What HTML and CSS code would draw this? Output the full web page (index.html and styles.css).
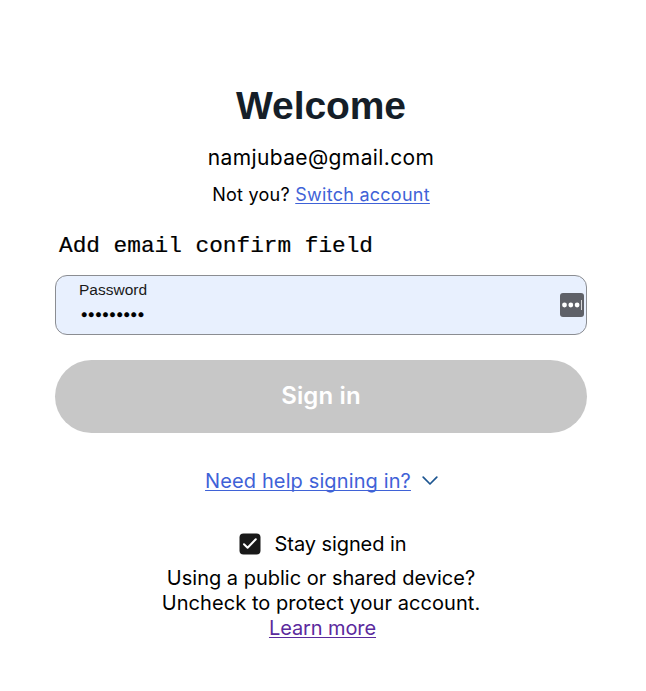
FILE: index.html
```html
<!DOCTYPE html>
<html lang="en">
<head>
<meta charset="utf-8">
<title>Sign in</title>
<link rel="stylesheet" href="styles.css">
</head>
<body>
<main class="signin">
  <h1 class="title">Welcome</h1>
  <p class="email">namjubae@gmail.com</p>
  <p class="switch">Not you? <a href="#">Switch account</a></p>
  <p class="note">Add email confirm field</p>
  <div class="field">
    <div class="field-text">
      <label class="field-label" for="password">Password</label>
      <div class="field-value" id="password">•••••••••</div>
    </div>
    <svg class="manager" width="24" height="24" viewBox="0 0 24 24">
      <rect width="24" height="24" rx="3" fill="#5f6168"/>
      <g fill="#fff"><circle cx="4.5" cy="12" r="2.4"/><circle cx="10.8" cy="12" r="2.4"/><circle cx="17.1" cy="12" r="2.4"/></g>
      <path d="M21.5 7v10" stroke="#d8d9db" stroke-width="1"/>
    </svg>
  </div>
  <button class="submit" type="button">Sign in</button>
  <div class="help">
    <a href="#">Need help signing in?</a>
    <svg width="16" height="10" viewBox="0 0 16 10" fill="none" stroke="#1d5691" stroke-width="1.7" stroke-linecap="round" stroke-linejoin="round"><path d="M1.2 1.2 8 8l6.8-6.8"/></svg>
  </div>
  <div class="stay">
    <svg width="22" height="22" viewBox="0 0 22 22"><rect x=".5" y=".5" width="21" height="21" rx="4" fill="#191919"/><path d="m5 11.2 3.6 3.6 8.2-8.6" fill="none" stroke="#fff" stroke-width="2" stroke-linecap="round" stroke-linejoin="round"/></svg>
    <span>Stay signed in</span>
  </div>
  <div class="hint">
    <p>Using a public or shared device?</p>
    <p class="hint-wide">Uncheck to protect your account.</p>
    <p class="hint-link"><a href="#">Learn more</a></p>
  </div>
</main>
</body>
</html>
```
FILE: styles.css
```css
* { box-sizing: border-box; }
body { margin: 0; background: #fff; color: #000; font-family: Inter, "Liberation Sans", sans-serif; }
h1, p { margin: 0; }
a { color: #3f62d7; text-decoration: underline; text-decoration-thickness: 1px; text-underline-offset: 2px; text-decoration-skip-ink: none; }
.signin { width: 532px; margin-left: 55px; padding-top: 83px; display: flex; flex-direction: column; text-align: center; white-space: nowrap; }
.title { font: bold 39px/46px "Liberation Sans", Arial, sans-serif; letter-spacing: -.1px; color: #151e28; }
.email { margin-top: 14px; font-size: 21px; line-height: 30px; letter-spacing: .38px; }
.switch { margin-top: 8px; font-size: 18px; line-height: 28px; letter-spacing: .26px; }
.note { margin: 22px 0 0 4px; text-align: left; font: 22.75px/30px "Liberation Mono", monospace; -webkit-text-stroke: .2px #000; }
.field { margin-top: 14px; height: 60px; border: 1px solid #8b8d92; border-radius: 12px; background: #e8f0fe; display: flex; align-items: center; justify-content: space-between; padding: 0 2px 0 23px; text-align: left; }
.field-text { align-self: flex-start; padding-top: 4px; }
.field-label { display: block; font: 15.5px/20px "Liberation Sans", Arial, sans-serif; color: #191919; }
.field-value { height: 28px; padding-left: 1px; font-size: 15px; line-height: 28px; letter-spacing: -1.35px; -webkit-text-stroke: .3px #000; }
.submit { margin-top: 25px; height: 73px; padding: 0 0 2px; border: 0; border-radius: 37px; background: #c7c7c7; color: #fff; font: 600 24px/30px Inter, sans-serif; letter-spacing: .15px; }
.help { margin-top: 33px; padding-left: 1px; height: 30px; display: flex; justify-content: center; align-items: center; gap: 11px; font-size: 20px; letter-spacing: .12px; }
.stay { margin-top: 33px; padding-left: 3px; height: 30px; display: flex; justify-content: center; align-items: center; gap: 14px; font-size: 20px; letter-spacing: -.08px; }
.hint { margin-top: 7px; font-size: 20px; line-height: 25px; }
.hint-wide { letter-spacing: .06px; }
.hint-link { padding-left: 3px; letter-spacing: -.1px; }
.hint a { color: #5b2a9d; }
```
